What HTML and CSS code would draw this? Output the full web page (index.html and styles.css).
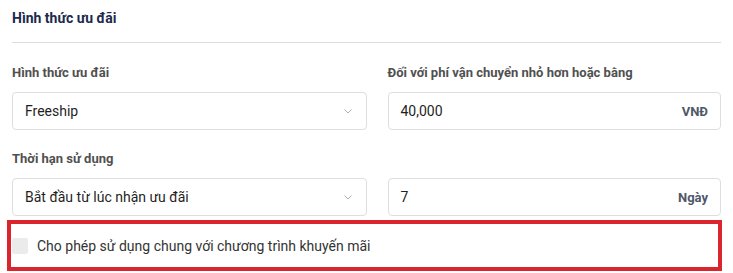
FILE: index.html
```html
<!DOCTYPE html>
<html lang="vi">
<head>
    <meta charset="UTF-8">
    <meta name="viewport" content="width=device-width, initial-scale=1.0">
    <title>Hình thức ưu đãi</title>
    <link rel="stylesheet" href="styles.css">
</head>
<body>
    <div class="card">
        <div class="card-header">
            <h2>Hình thức ưu đãi</h2>
        </div>

        <div class="row first">
            <div class="field">
                <div class="label">Hình thức ưu đãi</div>
                <div class="control">
                    <span class="value">Freeship</span>
                    <svg class="chevron" width="8" height="5" viewBox="0 0 8 5">
                        <path d="M0.5 0.5 L4 4 L7.5 0.5" fill="none" stroke="#b0b0b0" stroke-width="1"/>
                    </svg>
                </div>
            </div>
            <div class="field">
                <div class="label">Đối với phí vận chuyển nhỏ hơn hoặc bằng</div>
                <div class="control">
                    <span class="value">40,000</span>
                    <span class="unit">VNĐ</span>
                </div>
            </div>
        </div>

        <div class="row">
            <div class="field">
                <div class="label">Thời hạn sử dụng</div>
                <div class="control">
                    <span class="value">Bắt đầu từ lúc nhận ưu đãi</span>
                    <svg class="chevron" width="8" height="5" viewBox="0 0 8 5">
                        <path d="M0.5 0.5 L4 4 L7.5 0.5" fill="none" stroke="#b0b0b0" stroke-width="1"/>
                    </svg>
                </div>
            </div>
            <div class="field">
                <div class="label">&nbsp;</div>
                <div class="control">
                    <span class="value">7</span>
                    <span class="unit">Ngày</span>
                </div>
            </div>
        </div>

        <label class="check-row">
            <span class="checkbox"></span>
            <span>Cho phép sử dụng chung với chương trình khuyến mãi</span>
        </label>
    </div>
</body>
</html>
```

FILE: styles.css
```css
body {
    margin: 0;
    font-family: Roboto, 'Liberation Sans', Arial, sans-serif;
    background: #fff;
    color: #222;
}

.card {
    padding: 0 12px;
}

.card-header {
    padding: 8px 0 14px;
    border-bottom: 1px solid #dcdcdc;
}

.card-header h2 {
    margin: 0;
    font-size: 14px;
    line-height: 20px;
    font-weight: 700;
    color: #1b2a4e;
}

.row {
    display: grid;
    grid-template-columns: 50% 1fr;
    column-gap: 21px;
    margin-top: 20px;
}

.row.first {
    margin-top: 21px;
}

.label {
    font-size: 13px;
    line-height: 18px;
    font-weight: 700;
    color: #505050;
    margin-bottom: 10px;
}

.control {
    height: 38px;
    box-sizing: border-box;
    border: 1px solid #dedede;
    border-radius: 4px;
    padding: 0 12px;
    display: flex;
    align-items: center;
    justify-content: space-between;
    font-size: 14px;
}

.control .value {
    color: #1f1f1f;
}

.chevron {
    margin-right: 2px;
}

.unit {
    font-size: 13px;
    font-weight: 700;
    color: #4f5869;
}

.check-row {
    display: flex;
    align-items: center;
    gap: 9px;
    height: 51px;
    box-sizing: border-box;
    margin: 4px -1px 0 -5px;
    padding: 1px 0 0 1px;
    border: 4px solid #d9252e;
    font-size: 14px;
    color: #333;
}

.checkbox {
    width: 16px;
    height: 16px;
    border-radius: 2px;
    background: #ebebeb;
}
```
